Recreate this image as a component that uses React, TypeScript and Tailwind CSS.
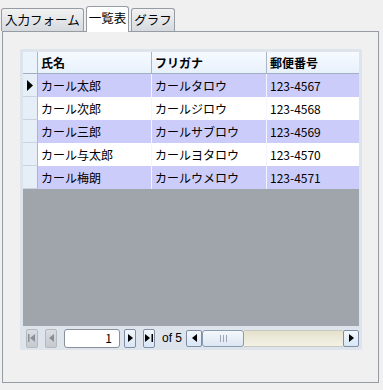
import React from "react";

const rows = [
  { name: "カール太郎", kana: "カールタロウ", zip: "123-4567" },
  { name: "カール次郎", kana: "カールジロウ", zip: "123-4568" },
  { name: "カール三郎", kana: "カールサブロウ", zip: "123-4569" },
  { name: "カール与太郎", kana: "カールヨタロウ", zip: "123-4570" },
  { name: "カール梅朗", kana: "カールウメロウ", zip: "123-4571" },
];

function Tri({ dir, color = "#000" }: { dir: "l" | "r"; color?: string }) {
  return (
    <svg width="5" height="8" viewBox="0 0 5 8">
      {dir === "r" ? (
        <polygon points="0,0 5,4 0,8" fill={color} />
      ) : (
        <polygon points="5,0 0,4 5,8" fill={color} />
      )}
    </svg>
  );
}

function NavBtn({ children, disabled }: { children: React.ReactNode; disabled?: boolean }) {
  return (
    <div
      className={
        disabled
          ? "w-[12px] h-[19px] rounded-[2px] border border-[#b5b9bf] bg-gradient-to-b from-[#dadde1] to-[#c6cacf] flex items-center justify-center"
          : "w-[12px] h-[19px] rounded-[2px] border border-[#7f8ea4] bg-gradient-to-b from-[#f2f7fd] to-[#d9e6f5] flex items-center justify-center"
      }
    >
      {children}
    </div>
  );
}

export default function App() {
  return (
    <div
      className="w-[383px] h-[390px] bg-[#f0f0f0] overflow-hidden text-black"
      style={{ fontFamily: '"Noto Sans CJK JP", "Noto Sans", sans-serif' }}
    >
      {/* tabs */}
      <div className="flex items-end h-[31px] pl-[1px]">
        <div className="h-[23px] px-[3px] mr-[2px] flex items-center text-[12.5px] leading-none border border-b-0 border-[#979ca4] rounded-t-[3px] bg-gradient-to-b from-[#f2f2f2] to-[#d6dadf]">
          入力フォーム
        </div>
        <div className="h-[26px] px-[2px] mr-[2px] flex items-center text-[12.5px] leading-none border border-b-0 border-[#979ca4] rounded-t-[3px] bg-white relative top-[1px] pb-[2px]">
          一覧表
        </div>
        <div className="h-[23px] px-[2px] flex items-center text-[12.5px] leading-none border border-b-0 border-[#979ca4] rounded-t-[3px] bg-gradient-to-b from-[#f2f2f2] to-[#d6dadf]">
          グラフ
        </div>
      </div>

      {/* panel */}
      <div className="ml-[2px] w-[377px] h-[352px] border border-[#979ca4] bg-[#f0f0f0] pt-[17px] pl-[17px]">
        <div className="w-[342px] h-[301px] bg-[#dde4ec] rounded-[2px] pt-[3px] pl-[3px] flex flex-col">
          {/* header */}
          <div className="flex h-[22px] w-[336px] text-[12px] font-bold border-b border-[#9fb0c4]">
            <div className="w-[15px] bg-[#eaf2fb] border-r border-[#a9b6c6]" />
            <div className="w-[114px] bg-gradient-to-b from-[#f6faff] to-[#e8f1fb] border-r border-[#a9b6c6] pl-[3px] flex items-center">氏名</div>
            <div className="w-[115px] bg-gradient-to-b from-[#f6faff] to-[#e8f1fb] border-r border-[#a9b6c6] pl-[3px] flex items-center">フリガナ</div>
            <div className="w-[92px] bg-gradient-to-b from-[#f6faff] to-[#e8f1fb] pl-[3px] flex items-center">郵便番号</div>
          </div>
          {/* rows */}
          {rows.map((r, i) => (
            <div key={i} className={"flex h-[23px] w-[336px] text-[12px] " + (i % 2 === 0 ? "bg-[#ccccfa]" : "bg-white")}>
              <div className="w-[15px] bg-[#e6eef8] border-r border-[#a9b6c6] border-b border-b-[#c9d4e2] flex items-center justify-center">
                {i === 0 && (
                  <svg width="6" height="11" viewBox="0 0 6 11">
                    <polygon points="0,0 6,5.5 0,11" fill="#000" />
                  </svg>
                )}
              </div>
              <div className="w-[114px] border-r border-[#f4f4ff] pl-[3px] flex items-center">{r.name}</div>
              <div className="w-[115px] border-r border-[#f4f4ff] pl-[3px] flex items-center">{r.kana}</div>
              <div className="w-[92px] pl-[3px] flex items-center">{r.zip}</div>
            </div>
          ))}
          {/* empty area */}
          <div className="w-[336px] flex-1 bg-[#a0a4ab]" />
          {/* nav bar */}
          <div className="w-[336px] h-[24px] flex items-center pl-[3px] text-[12px]">
            <NavBtn disabled>
              <svg width="8" height="8" viewBox="0 0 8 8">
                <rect x="0" y="0" width="1.5" height="8" fill="#8b9096" />
                <polygon points="7,0 2,4 7,8" fill="#8b9096" />
              </svg>
            </NavBtn>
            <div className="w-[7px]" />
            <NavBtn disabled>
              <Tri dir="l" color="#8b9096" />
            </NavBtn>
            <div className="w-[7px]" />
            <div className="w-[56px] h-[19px] bg-white border border-[#8a9099] rounded-[3px] flex items-center justify-end pr-[7px] text-[12px] leading-none">
              1
            </div>
            <div className="w-[4px]" />
            <NavBtn>
              <Tri dir="r" />
            </NavBtn>
            <div className="w-[7px]" />
            <NavBtn>
              <svg width="8" height="8" viewBox="0 0 8 8">
                <polygon points="0,0 5,4 0,8" fill="#000" />
                <rect x="6.5" y="0" width="1.5" height="8" fill="#000" />
              </svg>
            </NavBtn>
            <div className="ml-[7px] mr-[4px] leading-none text-[12px]" style={{ fontFamily: '"Liberation Sans", sans-serif' }}>of 5</div>
            {/* scrollbar */}
            <div className="flex h-[17px] w-[173px] items-stretch">
              <div className="w-[16px] rounded-[2px] border border-[#7f8ea4] bg-gradient-to-b from-[#f2f7fd] to-[#d9e6f5] flex items-center justify-center">
                <Tri dir="l" />
              </div>
              <div className="w-[42px] rounded-[3px] border border-[#8a9aaf] bg-gradient-to-b from-[#f4f8fd] to-[#dce6f2] flex items-center justify-center gap-[2px]">
                <div className="w-[1px] h-[7px] bg-[#9aa6b6]" />
                <div className="w-[1px] h-[7px] bg-[#9aa6b6]" />
                <div className="w-[1px] h-[7px] bg-[#9aa6b6]" />
              </div>
              <div className="flex-1 bg-gradient-to-b from-[#e4e1cc] to-[#f4f2e6] border-y border-[#c9c9c0]" />
              <div className="w-[16px] rounded-[2px] border border-[#7f8ea4] bg-gradient-to-b from-[#f2f7fd] to-[#d9e6f5] flex items-center justify-center">
                <Tri dir="r" />
              </div>
            </div>
          </div>
        </div>
      </div>
    </div>
  );
}
